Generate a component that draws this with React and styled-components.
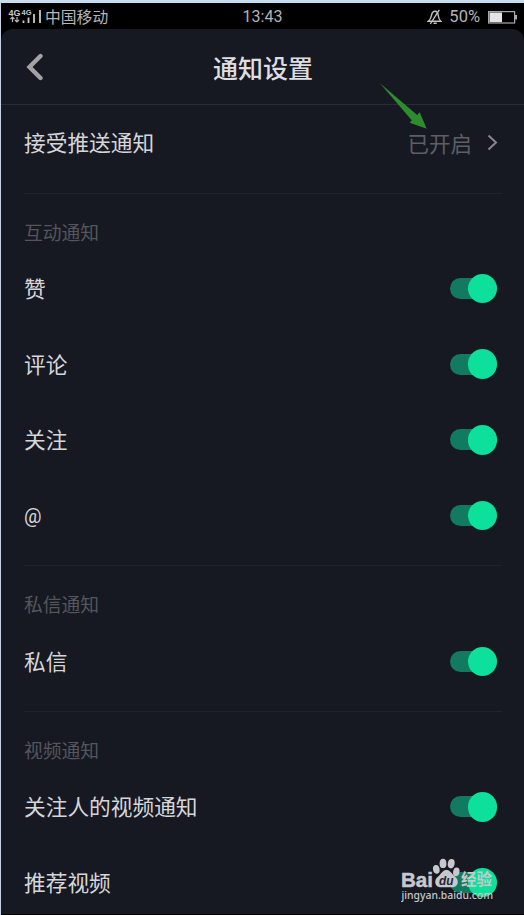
import React, { useState } from "react";
import styled, { createGlobalStyle } from "styled-components";

const sections = [
  {
    title: "互动通知",
    items: ["赞", "评论", "关注", "@"],
  },
  {
    title: "私信通知",
    items: ["私信"],
  },
  {
    title: "视频通知",
    items: ["关注人的视频通知", "推荐视频"],
  },
];

const StatusBar = () => {
  return (
    <Status>
      <StatusSide>
        <svg width="34" height="18" viewBox="0 0 34 18">
          <g fill="#c9c9cd" fontFamily="'Liberation Sans', sans-serif" fontWeight="700">
            <text x="0.5" y="7.5" fontSize="9" textLength="12" lengthAdjust="spacingAndGlyphs">
              4G
            </text>
            <text x="13.5" y="6.5" fontSize="7.5" textLength="10" lengthAdjust="spacingAndGlyphs">
              4G
            </text>
          </g>
          <path
            d="M4.5 14V9M2.5 11L4.5 9l2 2M9 9v5M7 12l2 2 2-2"
            fill="none"
            stroke="#b5b5ba"
            strokeWidth="1.2"
          />
          <path
            d="M15.5 12.5v2.5M20.5 9.5V15M26 6v9M32 2v13"
            stroke="#c9c9cd"
            strokeWidth="1.8"
          />
        </svg>
        <Carrier>中国移动</Carrier>
      </StatusSide>
      <Time>13:43</Time>
      <StatusSide>
        <svg width="15" height="16" viewBox="0 0 15 16">
          <g fill="none" stroke="#c2c2c6" strokeWidth="1.4">
            <path d="M1.2 12.3h12.6c-2-1.5-2.2-3.5-2.6-6C10.9 3.7 9.8 2.3 8 2.3S5 3.7 4.5 6.3c-.5 2.5-1.2 4.5-3.3 6z" />
            <path d="M12.3 0.8L3.3 15M6.5 14.3h3.2" />
          </g>
        </svg>
        <Percent>50%</Percent>
        <svg width="29" height="13" viewBox="0 0 29 13">
          <rect
            x="0.6"
            y="0.6"
            width="26"
            height="11.4"
            fill="none"
            stroke="#a9a9ad"
            strokeWidth="1.2"
          />
          <rect x="1.5" y="1.5" width="12.5" height="9.6" fill="#e4e4e8" />
          <rect x="27" y="4" width="2" height="4.5" fill="#a9a9ad" />
        </svg>
      </StatusSide>
    </Status>
  );
};

const ToggleRow = ({ label }) => {
  const [on, setOn] = useState(true);

  return (
    <Row>
      <Label $latin={label === "@"}>{label}</Label>
      <Switch
        type="button"
        role="switch"
        aria-checked={on}
        $on={on}
        onClick={() => setOn(!on)}
      >
        <Knob $on={on} />
      </Switch>
    </Row>
  );
};

const Watermark = () => {
  return (
    <Mark width="100" height="54" viewBox="0 0 100 54">
      <g fill="#c6c8cd">
        <text
          x="0"
          y="30.6"
          fontFamily="'Liberation Sans', sans-serif"
          fontWeight="700"
          fontSize="21"
          stroke="#c6c8cd"
          strokeWidth="0.5"
          textLength="32"
          lengthAdjust="spacingAndGlyphs"
        >
          Bai
        </text>
        <ellipse cx="35.3" cy="13.3" rx="3.3" ry="4.4" transform="rotate(-10 35.3 13.3)" />
        <ellipse cx="42" cy="7.4" rx="3.4" ry="4.7" />
        <ellipse cx="50.2" cy="7.7" rx="3.4" ry="4.7" transform="rotate(10 50.2 7.7)" />
        <ellipse cx="55.3" cy="15.8" rx="3.2" ry="4.4" transform="rotate(10 55.3 15.8)" />
        <path d="M45.5 14c3.3 0 4.7 2.8 7 5.2 2 2 4.3 3.4 4.3 6.6 0 3.3-2.4 5.5-5.5 5.5H39.8c-3.3 0-5.6-2.2-5.6-5.5 0-3.2 2.3-4.6 4.3-6.6 2.4-2.4 3.5-5.2 7-5.2z" />
        <text
          x="60"
          y="29"
          fontFamily="'Noto Sans CJK SC', sans-serif"
          fontWeight="700"
          fontSize="15.5"
          textLength="31"
        >
          经验
        </text>
        <text
          x="0.5"
          y="43"
          fontFamily="'Noto Sans', sans-serif"
          fontWeight="500"
          fontSize="11"
          textLength="91.5"
          lengthAdjust="spacingAndGlyphs"
        >
          jingyan.baidu.com
        </text>
      </g>
      <text
        x="38"
        y="29"
        fill="#24252e"
        fontFamily="'Liberation Sans', sans-serif"
        fontWeight="700"
        fontStyle="italic"
        fontSize="12.5"
        textLength="14.5"
        lengthAdjust="spacingAndGlyphs"
      >
        du
      </text>
    </Mark>
  );
};

const App = () => {
  return (
    <Layout>
      <GlobalStyle />
      <StatusBar />
      <Panel>
        <Header>
          <BackButton type="button" aria-label="返回">
            <svg width="18" height="28" viewBox="0 0 18 28">
              <path
                d="M14.5 3L3.5 14l11 11"
                fill="none"
                stroke="#a3a3a7"
                strokeWidth="4.4"
                strokeLinecap="round"
                strokeLinejoin="miter"
              />
            </svg>
          </BackButton>
          <Title>通知设置</Title>
        </Header>
        <Group>
          <Row>
            <Label>接受推送通知</Label>
            <Value>
              已开启
              <svg width="11" height="17" viewBox="0 0 11 17">
                <path
                  d="M1.5 1.5l7.5 7-7.5 7"
                  fill="none"
                  stroke="#87878c"
                  strokeWidth="2"
                />
              </svg>
            </Value>
          </Row>
        </Group>
        {sections.map((section) => (
          <Group key={section.title}>
            <Divider />
            <GroupTitle>{section.title}</GroupTitle>
            {section.items.map((item) => (
              <ToggleRow key={item} label={item} />
            ))}
          </Group>
        ))}
      </Panel>
      <Pointer width="50" height="48" viewBox="0 0 50 48">
        <path
          d="M0 0.3L37.2 32L39.7 29.3L46.7 45.7L29.7 39.7L31.7 37.2z"
          fill="#2e8b2e"
        />
      </Pointer>
      <Watermark />
    </Layout>
  );
};

export default App;

const GlobalStyle = createGlobalStyle`
  * {
    box-sizing: border-box;
  }

  body {
    margin: 0;
    background-color: #161922;
    font-family: Roboto, "Noto Sans CJK SC", sans-serif;
  }
`;

const Layout = styled.div`
  position: relative;
  display: flex;
  flex-direction: column;
  width: 524px;
  height: 915px;
  overflow: hidden;
  background-color: #000;
  border-left: 1px solid #c5d3e5;
  border-top: 3px solid #c9dcef;

  &::before {
    content: "";
    position: absolute;
    top: -2px;
    left: -1px;
    right: 0;
    height: 1px;
    background-color: #8eabc4;
  }
`;

const Status = styled.div`
  display: grid;
  grid-template-columns: 1fr auto 1fr;
  align-items: center;
  flex-shrink: 0;
  height: 26px;
  padding: 2px 7px 0 7px;
  color: #b4b4b9;

  & > :last-child {
    justify-content: flex-end;
  }
`;

const StatusSide = styled.div`
  display: flex;
  align-items: center;
`;

const Carrier = styled.span`
  margin-left: 3px;
  font-family: "Noto Sans CJK SC", sans-serif;
  font-size: 15.8px;
  line-height: 20px;
`;

const Time = styled.span`
  font-size: 16px;
  line-height: 20px;
`;

const Percent = styled.span`
  margin: 0 8px 0 7px;
  font-size: 16.5px;
  line-height: 20px;
`;

const Panel = styled.div`
  display: flex;
  flex-direction: column;
  flex-shrink: 0;
  height: 885px;
  overflow: hidden;
  background-color: #161922;
  border-radius: 12px 12px 0 0;
`;

const Header = styled.div`
  display: grid;
  grid-template-columns: 60px 1fr 60px;
  align-items: center;
  flex-shrink: 0;
  height: 76px;
  border-bottom: 1px solid #292b35;
`;

const BackButton = styled.button`
  display: flex;
  padding: 0 0 0 25px;
  border: none;
  background: none;
  cursor: pointer;
`;

const Title = styled.h1`
  margin: 0;
  padding-left: 1px;
  font-family: "Noto Sans CJK SC", sans-serif;
  font-size: 25px;
  font-weight: 500;
  line-height: 36px;
  text-align: center;
  color: #dedee1;
`;

const Group = styled.div`
  flex-shrink: 0;
  padding: 0 22px 12px 23px;
`;

const Divider = styled.div`
  height: 1px;
  background-color: #20222c;
`;

const GroupTitle = styled.h2`
  margin: 0;
  padding: 20px 0 2px;
  font-family: "Noto Sans CJK SC", sans-serif;
  font-size: 18.8px;
  font-weight: 400;
  line-height: 35px;
  color: #54565c;
`;

const Row = styled.div`
  display: flex;
  align-items: center;
  justify-content: space-between;
  height: 75.7px;
  padding-right: 4px;
`;

const Label = styled.span`
  padding: ${(props) => (props.$latin ? "2px 0 0" : "0 0 1px")};
  font-family: ${(props) => (props.$latin ? "Roboto," : "")} "Noto Sans CJK SC", sans-serif;
  font-size: ${(props) => (props.$latin ? "19.5px" : "21.7px")};
  line-height: 32px;
  color: #d6d6d9;
`;

const Value = styled.span`
  display: flex;
  align-items: center;
  gap: 15px;
  font-family: "Noto Sans CJK SC", sans-serif;
  font-size: 21.5px;
  line-height: 32px;
  color: #5d5f65;
`;

const Switch = styled.button`
  display: flex;
  align-items: center;
  justify-content: ${(props) => (props.$on ? "flex-end" : "flex-start")};
  width: 47px;
  height: 21px;
  margin-right: 1px;
  padding: 0;
  border: none;
  border-radius: 11px;
  background-color: ${(props) => (props.$on ? "#127a5e" : "#3a3c46")};
  cursor: pointer;
`;

const Knob = styled.span`
  flex-shrink: 0;
  width: 29.5px;
  height: 29.5px;
  border-radius: 50%;
  background-color: ${(props) => (props.$on ? "#0de09b" : "#8a8c93")};
`;

const Pointer = styled.svg`
  position: absolute;
  top: 80px;
  left: 379px;
  pointer-events: none;
`;

const Mark = styled.svg`
  position: absolute;
  left: 400px;
  top: 853px;
  pointer-events: none;
`;
